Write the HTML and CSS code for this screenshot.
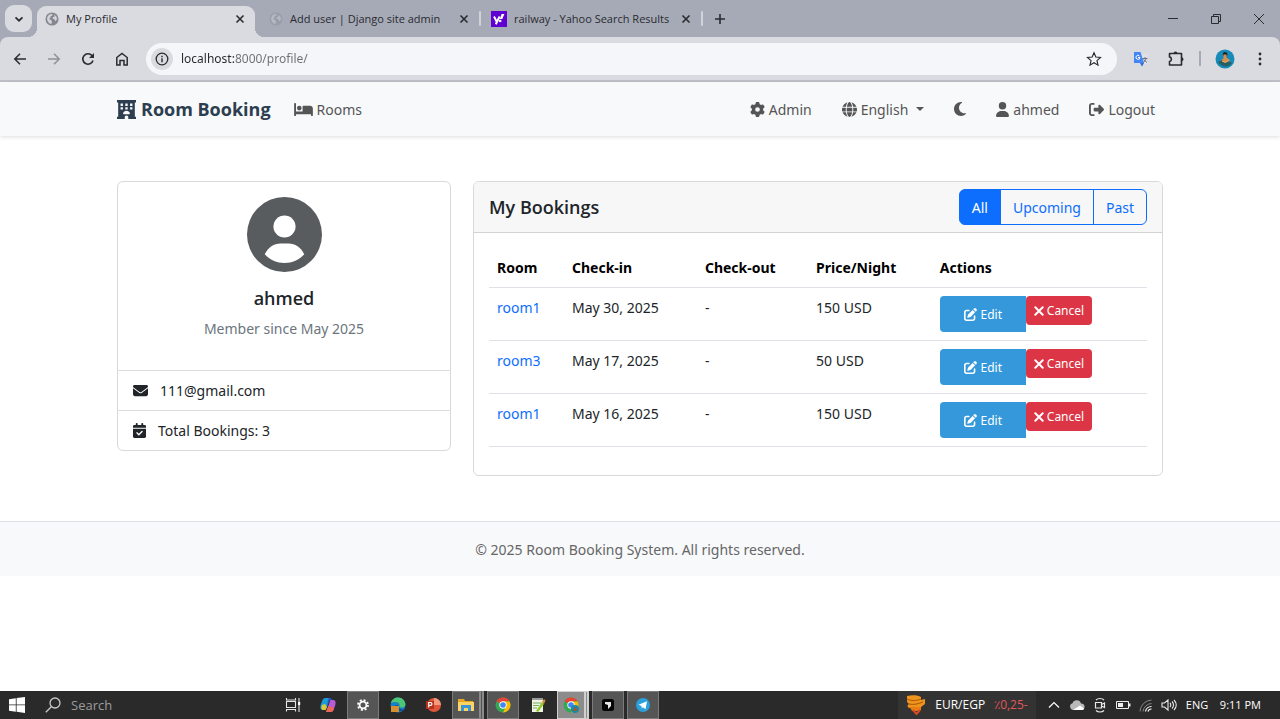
FILE: index.html
```html
<!DOCTYPE html>
<html lang="en">
<head>
<meta charset="utf-8">
<title>My Profile</title>
<link rel="stylesheet" href="styles.css">
</head>
<body>
<svg class="sprite" aria-hidden="true">
  <symbol id="globe-tab" viewBox="0 0 16 16"><circle cx="8" cy="8" r="7.5" fill="#85888f"/><path d="M2.5 6.5c1-3 3.5-4.5 6-4l-.5 1.8-2 .7.3 1.6-1.8 1.3 2.3 1.3 1.2 2-.8 2.6C4 12.800 1.900 9.500 2.500 6.500zM10 3l3 2.200.8 2.800-1.800 2.500-1.200-2.200-2-.5.2-1.800 2-.6z" fill="#d3d5da"/></symbol>
  <symbol id="close" viewBox="0 0 10 10"><path d="M1.500 1.500l7 7m0-7l-7 7" stroke="currentColor" stroke-width="1.600" fill="none"/></symbol>
  <symbol id="edit" viewBox="0 0 512 512"><path fill="currentColor" d="M471.6 21.7c-21.9-21.9-57.3-21.9-79.2 0L362.3 51.7l97.9 97.9 30.1-30.1c21.9-21.9 21.9-57.3 0-79.2L471.6 21.7zm-299.2 220c-6.1 6.1-10.8 13.6-13.5 21.9l-29.6 88.8c-2.9 8.6-.6 18.1 5.8 24.6s15.9 8.7 24.6 5.8l88.8-29.6c8.2-2.7 15.7-7.4 21.9-13.5L437.7 172.3 339.7 74.3 172.4 241.7zM96 64C43 64 0 107 0 160V416c0 53 43 96 96 96H352c53 0 96-43 96-96V320c0-17.7-14.3-32-32-32s-32 14.3-32 32v96c0 17.7-14.3 32-32 32H96c-17.7 0-32-14.3-32-32V160c0-17.7 14.3-32 32-32h96c17.7 0 32-14.3 32-32s-14.3-32-32-32H96z"/></symbol>
  <symbol id="xmark" viewBox="0 0 10 14"><path d="M1.300 3.300l7.400 7.400m0-7.400l-7.400 7.400" stroke="currentColor" stroke-width="2" stroke-linecap="round" fill="none"/></symbol>
  <symbol id="chrome" viewBox="0 0 16 16"><circle cx="8" cy="8" r="7.500" fill="#34a853"/><path d="M8 8L1.500 4.250A7.500 7.500 0 0 1 14.500 4.250L8 4.600z" fill="#ea4335"/><path d="M8 4.500h6.600A7.500 7.500 0 0 1 8 15.500L11 9.500z" fill="#fbbc04"/><circle cx="8" cy="8" r="3.700" fill="#fff"/><circle cx="8" cy="8" r="2.800" fill="#4285f4"/></symbol>
</svg>

<header class="chrome">
  <div class="tabstrip">
    <button class="tab-search" aria-label="Search tabs"><svg class="i10" viewBox="0 0 10 10"><path d="M1.500 3.300L5 6.700l3.500-3.400" stroke="currentColor" stroke-width="1.700" fill="none"/></svg></button>
    <div class="tab tab-active"><svg class="i14"><use href="#globe-tab"/></svg><span class="tab-title">My Profile</span><button class="tab-close" aria-label="Close tab"><svg class="i10"><use href="#close"/></svg></button></div>
    <div class="tab"><svg class="i14 dim"><use href="#globe-tab"/></svg><span class="tab-title">Add user | Django site admin</span><button class="tab-close" aria-label="Close tab"><svg class="i10"><use href="#close"/></svg></button></div>
    <div class="tab-sep"></div>
    <div class="tab"><svg class="i16" viewBox="0 0 16 16"><path d="M0 0h16v16H0z" fill="#5f01d1"/><path d="M3 5.500l2.600 5M8.600 5.500l-3.800 7.700" stroke="#fff" stroke-width="2" fill="none"/><path d="M10.600 3h2.800l-2.100 5H8.800z" fill="#fff"/><circle cx="9.200" cy="10" r="1.300" fill="#fff"/></svg><span class="tab-title">railway - Yahoo Search Results</span><button class="tab-close" aria-label="Close tab"><svg class="i10"><use href="#close"/></svg></button></div>
    <div class="tab-sep"></div>
    <button class="tab-new" aria-label="New tab"><svg class="i10" viewBox="0 0 10 10"><path d="M5 0v10M0 5h10" stroke="currentColor" stroke-width="1.600"/></svg></button>
    <div class="window-controls">
      <button aria-label="Minimize"><svg class="i10" viewBox="0 0 10 10"><path d="M0 4.500h10" stroke="currentColor"/></svg></button>
      <button aria-label="Restore"><svg class="i10" viewBox="0 0 10 10"><path d="M.5 2.500h7v7h-7zM2.500 2.500v-2h7v7h-2" stroke="currentColor" fill="none"/></svg></button>
      <button aria-label="Close"><svg class="i10" viewBox="0 0 10 10"><path d="M0 0l10 10M10 0L0 10" stroke="currentColor"/></svg></button>
    </div>
  </div>
  <div class="toolbar">
    <div class="nav-buttons">
      <button aria-label="Back"><svg class="i14" viewBox="0 0 14 14"><path d="M13 7H2M7 1.800L1.800 7 7 12.200" stroke="currentColor" stroke-width="1.500" fill="none"/></svg></button>
      <button class="disabled" aria-label="Forward"><svg class="i14" viewBox="0 0 14 14"><path d="M1 7h11M7 1.800L12.200 7 7 12.200" stroke="currentColor" stroke-width="1.500" fill="none"/></svg></button>
      <button aria-label="Reload"><svg class="i14" viewBox="0 0 14 14"><path d="M12 8.500A5.200 5.200 0 1 1 11 3.600l1 1.400" stroke="currentColor" stroke-width="1.600" fill="none"/><path d="M13 1v5H8z" fill="currentColor"/></svg></button>
      <button aria-label="Home"><svg class="i14" viewBox="0 0 14 14"><path d="M1.800 13V5.500L7 1.500l5.200 4V13H9V8.500H5V13z" stroke="currentColor" stroke-width="1.500" fill="none"/></svg></button>
    </div>
    <div class="omnibox">
      <button class="site-info" aria-label="Site information"><svg class="i14" viewBox="0 0 14 14"><circle cx="7" cy="7" r="5.800" stroke="currentColor" stroke-width="1.300" fill="none"/><path d="M7 6.200v4M7 3.700v1.500" stroke="currentColor" stroke-width="1.400"/></svg></button>
      <input class="url" type="text" aria-label="Address" value="localhost:8000/profile/">
      <button class="star" aria-label="Bookmark"><svg class="i16" viewBox="0 0 14 14"><path d="M7 1.500l1.600 3.800 4.100.4-3.100 2.700.9 4L7 10.300l-3.500 2.100.9-4L1.300 5.700l4.100-.4z" stroke="currentColor" stroke-width="1" fill="none"/></svg></button>
    </div>
    <div class="extensions">
      <button aria-label="Translate"><svg class="i16" viewBox="0 0 16 16"><path d="M7 3h7.500v10H9z" fill="#dfe1e5"/><path d="M1 1h6.500l3.500 11H1z" fill="#4285f4"/><path d="M7 12h4l-2 3.500z" fill="#3367d6"/><path d="M6.500 5A2 2 0 1 0 7 6.500H5" stroke="#fff" fill="none"/><path d="M9.500 7.500h5M12 6v1.500M13.500 7.500l-3 4M10.500 8.500l3.500 3" stroke="#6b7480" fill="none"/></svg></button>
      <button aria-label="Extensions"><svg class="i16" viewBox="0 0 16 16"><path d="M1.500 2.500h12v11.500h-12v-3.400a2.400 2.400 0 0 0 0-4.700z" stroke="currentColor" stroke-width="1.600" stroke-linejoin="round" fill="none"/><path d="M5.500 2.500a2 2 0 0 1 4 0zM13.500 6.200a2 2 0 0 1 0 4z" fill="currentColor"/></svg></button>
      <span class="divider"></span>
      <button aria-label="Profile"><svg class="i20" viewBox="0 0 20 20"><circle cx="10" cy="10" r="9.500" fill="#168bb9"/><path d="M8 4c1.500-2 4.500-1 4.500 1.500l-1 2-3.500-1z" fill="#27201f"/><path d="M8.500 5.500h3v3l3 2.500-1 4H6.500L5 12l3.500-2.500z" fill="#d98c4c"/><path d="M3 13l4-2 2 2.500 5-1 3 1.500c-3 4.500-10 5-14-1z" fill="#275f63"/><path d="M7 12l4 1.500 3-3" stroke="#f0b36c" fill="none"/></svg></button>
      <button aria-label="Menu"><svg class="i16" viewBox="0 0 16 16"><g fill="currentColor"><circle cx="8" cy="3" r="1.400"/><circle cx="8" cy="8" r="1.400"/><circle cx="8" cy="13" r="1.400"/></g></svg></button>
    </div>
  </div>
</header>

<div class="page">
  <nav class="navbar">
    <div class="container nav-inner">
      <a class="brand" href="#"><svg class="brand-icon" viewBox="0 0 512 512"><path fill="currentColor" d="M0 0H512V64H480V448H512V512H304V464c0-26.500-21.500-48-48-48s-48 21.500-48 48v48H0V448H32V64H0zM96 96v64h64V96zM224 96v64h64V96zM352 96v64h64V96zM96 192v64h64V192zM224 192v64h64V192zM352 192v64h64V192zM328 384c13.300 0 24.300-10.900 21-23.800c-10.600-41.500-48.200-72.200-93-72.200s-82.500 30.700-93 72.200c-3.300 12.800 7.800 23.800 21 23.800H328z" fill-rule="evenodd"/></svg>Room Booking</a>
      <a class="nav-link" href="#"><svg class="fa fa-bed" viewBox="0 0 640 512"><path fill="currentColor" d="M32 32c17.7 0 32 14.3 32 32V320H288V160c0-17.7 14.3-32 32-32H544c53 0 96 43 96 96V448c0 17.7-14.3 32-32 32s-32-14.3-32-32V416H64v32c0 17.7-14.3 32-32 32s-32-14.3-32-32V64C0 46.300 14.300 32 32 32zm144 96a80 80 0 1 1 0 160 80 80 0 1 1 0-160z"/></svg>Rooms</a>
      <div class="nav-right">
        <a class="nav-link" href="#"><svg class="fa" viewBox="0 0 512 512"><path fill="currentColor" d="M495.9 166.6c3.2 8.7 .5 18.4-6.4 24.6l-43.3 39.4c1.1 8.3 1.7 16.8 1.7 25.4s-.6 17.1-1.7 25.4l43.3 39.4c6.9 6.2 9.6 15.9 6.4 24.6c-4.4 11.9-9.7 23.3-15.8 34.3l-4.7 8.1c-6.6 11-14 21.4-22.1 31.2c-5.9 7.2-15.7 9.6-24.5 6.8l-55.7-17.7c-13.4 10.3-28.2 18.9-44 25.4l-12.5 57.1c-2 9.1-9 16.3-18.2 17.8c-13.8 2.3-28 3.5-42.5 3.5s-28.7-1.2-42.5-3.5c-9.2-1.5-16.2-8.7-18.2-17.8l-12.5-57.1c-15.8-6.5-30.6-15.1-44-25.4L83.1 425.9c-8.8 2.8-18.6 .3-24.5-6.8c-8.1-9.8-15.5-20.2-22.1-31.2l-4.7-8.1c-6.1-11-11.4-22.4-15.8-34.3c-3.2-8.7-.5-18.4 6.4-24.6l43.3-39.4C64.6 273.1 64 264.6 64 256s.6-17.1 1.7-25.4L22.4 191.2c-6.9-6.2-9.6-15.9-6.4-24.6c4.4-11.9 9.7-23.3 15.8-34.3l4.7-8.1c6.6-11 14-21.4 22.1-31.2c5.9-7.2 15.7-9.6 24.5-6.8l55.7 17.7c13.4-10.3 28.2-18.9 44-25.4l12.5-57.1c2-9.1 9-16.3 18.2-17.8C227.3 1.2 241.5 0 256 0s28.7 1.2 42.5 3.500c9.200 1.500 16.200 8.700 18.200 17.800l12.500 57.100c15.800 6.500 30.600 15.100 44 25.400l55.700-17.700c8.800-2.800 18.600-.3 24.500 6.800c8.100 9.800 15.500 20.200 22.100 31.200l4.700 8.100c6.100 11 11.400 22.400 15.800 34.300zM256 336a80 80 0 1 0 0-160 80 80 0 1 0 0 160z"/></svg>Admin</a>
        <button class="nav-link dropdown"><svg class="fa" viewBox="0 0 512 512"><path fill="currentColor" d="M352 256c0 22.2-1.2 43.6-3.3 64H163.3c-2.2-20.4-3.3-41.8-3.3-64s1.2-43.6 3.3-64H348.7c2.2 20.4 3.3 41.8 3.3 64zm28.8-64H503.9c5.3 20.5 8.1 41.9 8.1 64s-2.8 43.5-8.1 64H380.8c2.1-20.6 3.2-42 3.2-64s-1.1-43.4-3.2-64zm112.6-32H376.7c-10-63.9-29.8-117.4-55.3-151.6c78.3 20.7 142 77.5 171.9 151.6zm-149.1 0H167.7c6.1-36.4 15.5-68.6 27-94.7c10.5-23.6 22.2-40.7 33.5-51.5C239.4 3.2 248.7 0 256 0s16.6 3.2 27.8 13.8c11.3 10.8 23 27.9 33.5 51.5c11.6 26 20.9 58.2 27 94.7zm-209 0H18.6C48.6 85.9 112.2 29.1 190.6 8.4C165.1 42.6 145.3 96.1 135.3 160zM8.1 192H131.2c-2.1 20.6-3.2 42-3.2 64s1.1 43.4 3.2 64H8.1C2.8 299.5 0 278.1 0 256s2.8-43.5 8.1-64zM194.7 446.6c-11.6-26-20.9-58.2-27-94.6H344.3c-6.1 36.4-15.5 68.6-27 94.6c-10.5 23.6-22.2 40.7-33.5 51.5C272.6 508.8 263.3 512 256 512s-16.6-3.2-27.8-13.8c-11.3-10.8-23-27.9-33.5-51.5zM135.3 352c10 63.9 29.8 117.4 55.3 151.6C112.2 482.9 48.6 426.1 18.6 352H135.3zm358.1 0c-30 74.1-93.6 130.9-171.9 151.6c25.500-34.200 45.200-87.700 55.300-151.600H493.400z"/></svg>English<span class="caret"></span></button>
        <button class="nav-link" aria-label="Dark mode"><svg class="fa fa-moon" viewBox="0 0 384 512"><path fill="currentColor" d="M223.5 32C100 32 0 132.3 0 256S100 480 223.5 480c60.6 0 115.5-24.2 155.8-63.4c5-4.9 6.3-12.5 3.1-18.7s-10.1-9.7-17-8.5c-9.8 1.7-19.8 2.6-30.1 2.6c-96.9 0-175.500-78.800-175.500-176c0-65.800 36-123.100 89.300-153.300c6.100-3.500 9.200-10.500 7.700-17.300s-7.300-11.900-14.300-12.500c-6.300-.5-12.600-.8-19-.8z"/></svg></button>
        <a class="nav-link" href="#"><svg class="fa fa-narrow" viewBox="0 0 448 512"><path fill="currentColor" d="M224 256A128 128 0 1 0 224 0a128 128 0 1 0 0 256zm-45.7 48C79.8 304 0 383.8 0 482.3C0 498.7 13.3 512 29.7 512H418.3c16.4 0 29.7-13.3 29.7-29.7C448 383.8 368.2 304 269.7 304H178.3z"/></svg>ahmed</a>
        <a class="nav-link" href="#"><svg class="fa" viewBox="0 0 512 512"><path fill="currentColor" d="M377.9 105.9L500.7 228.7c7.2 7.2 11.3 17.1 11.3 27.3s-4.1 20.1-11.3 27.3L377.9 406.1c-6.4 6.4-15 9.9-24 9.9c-18.7 0-33.9-15.2-33.9-33.9l0-62.1-128 0c-17.7 0-32-14.3-32-32l0-64c0-17.7 14.3-32 32-32l128 0 0-62.1c0-18.7 15.2-33.9 33.9-33.900c9 0 17.600 3.600 24 9.900zM160 96L96 96c-17.700 0-32 14.300-32 32l0 256c0 17.700 14.300 32 32 32l64 0c17.700 0 32 14.300 32 32s-14.300 32-32 32l-64 0c-53 0-96-43-96-96L0 128C0 75 43 32 96 32l64 0c17.700 0 32 14.300 32 32s-14.300 32-32 32z"/></svg>Logout</a>
      </div>
    </div>
  </nav>

  <main class="container columns">
    <section class="card">
      <div class="profile">
        <svg class="avatar" viewBox="0 0 224 224"><circle cx="112" cy="112" r="112" fill="#585c5f"/><circle cx="112" cy="88" r="33" fill="#fff"/><path d="M53 171C64 150 80 139 100 139h24c20 0 36 11 47 32-15 17-36 26-59 26s-44-9-59-26z" fill="#fff"/></svg>
        <h5 class="name">ahmed</h5>
        <p class="since">Member since May 2025</p>
      </div>
      <ul class="facts">
        <li><svg class="fa" viewBox="0 0 512 512"><path fill="currentColor" d="M48 64C21.5 64 0 85.5 0 112c0 15.1 7.1 29.3 19.2 38.4L236.8 313.6c11.4 8.5 27 8.5 38.4 0L492.8 150.4c12.1-9.1 19.2-23.3 19.2-38.4c0-26.5-21.5-48-48-48H48zM0 176V384c0 35.3 28.7 64 64 64H448c35.3 0 64-28.7 64-64V176L294.4 339.2c-22.8 17.1-54 17.1-76.8 0L0 176z"/></svg>111@gmail.com</li>
        <li><svg class="fa fa-narrow" viewBox="0 0 448 512"><path fill="currentColor" d="M128 0c17.7 0 32 14.3 32 32V64H288V32c0-17.7 14.3-32 32-32s32 14.3 32 32V64h48c26.5 0 48 21.5 48 48v48H0V112C0 85.5 21.5 64 48 64H96V32c0-17.7 14.3-32 32-32zM0 192H448V464c0 26.5-21.5 48-48 48H48c-26.5 0-48-21.5-48-48V192zM329 305c9.4-9.4 9.4-24.6 0-33.9s-24.6-9.4-33.9 0l-95 95-47-47c-9.4-9.4-24.6-9.4-33.9 0s-9.4 24.6 0 33.9l64 64c9.4 9.4 24.6 9.4 33.9 0L329 305z"/></svg>Total Bookings: 3</li>
      </ul>
    </section>

    <section class="card">
      <div class="card-head">
        <h5 class="card-title">My Bookings</h5>
        <div class="filters"><button class="filter active">All</button><button class="filter">Upcoming</button><button class="filter">Past</button></div>
      </div>
      <div class="card-body">
        <table class="bookings">
          <colgroup><col class="c-room"><col class="c-in"><col class="c-out"><col class="c-price"><col></colgroup>
          <thead><tr><th>Room</th><th>Check-in</th><th>Check-out</th><th>Price/Night</th><th>Actions</th></tr></thead>
          <tbody>
            <tr><td><a href="#">room1</a></td><td>May 30, 2025</td><td>-</td><td>150 USD</td><td><div class="actions"><button class="edit"><svg><use href="#edit"/></svg>Edit</button><button class="cancel"><svg><use href="#xmark"/></svg>Cancel</button></div></td></tr>
            <tr><td><a href="#">room3</a></td><td>May 17, 2025</td><td>-</td><td>50 USD</td><td><div class="actions"><button class="edit"><svg><use href="#edit"/></svg>Edit</button><button class="cancel"><svg><use href="#xmark"/></svg>Cancel</button></div></td></tr>
            <tr><td><a href="#">room1</a></td><td>May 16, 2025</td><td>-</td><td>150 USD</td><td><div class="actions"><button class="edit"><svg><use href="#edit"/></svg>Edit</button><button class="cancel"><svg><use href="#xmark"/></svg>Cancel</button></div></td></tr>
          </tbody>
        </table>
      </div>
    </section>
  </main>

  <footer class="footer">© 2025 Room Booking System. All rights reserved.</footer>
</div>

<div class="taskbar">
  <button class="start" aria-label="Start"><svg class="i16" viewBox="0 0 16 16"><path d="M0 2.200l6.800-1v6.300H0zM7.600 1.100L16 0v7.500H7.600zM0 8.300h6.800v6.400L0 13.800zM7.600 8.300H16V16l-8.400-1.200z" fill="#fff"/></svg></button>
  <label class="search"><svg class="i16" viewBox="0 0 16 16"><circle cx="10" cy="6" r="5" stroke="#c8c8c8" stroke-width="1.300" fill="none"/><path d="M6.300 9.700L.8 15.200" stroke="#c8c8c8" stroke-width="1.300"/></svg><input type="text" placeholder="Search" aria-label="Search"></label>
  <div class="apps">
    <button aria-label="Task view"><svg class="i16" viewBox="0 0 16 16"><path d="M1.500 4.500h9v6h-9zM1.500 1v2h9V1M1.500 14.500v-2h9v2M14 1v14" stroke="#e6e6e6" stroke-width="1.100" fill="none"/><path d="M13 5h2.200v3H13z" fill="#fff"/></svg></button>
    <button aria-label="Copilot"><svg class="i16" viewBox="0 0 16 16"><path d="M5 1h5L7 10 5.500 13H3C0 13 0 10 1 7l1.500-4C3 2 4 1 5 1z" fill="#1c9bd8"/><path d="M2 8l3-1 2 3-1.500 3H3C1 13 1 10 2 8z" fill="#d9c93a"/><path d="M9 1h1c1.500 0 1.500 2 2.500 2L9 4.500 7 10 8 3z" fill="#2356c4"/><path d="M10.500 3H13c3 0 3 3 2 6l-1.500 4c-.5 1.500-1.500 2-3 2H6z" fill="#b75cd3"/><path d="M8.500 9l5.500 2c-.8 3-1.500 4-4 4H6z" fill="#f0674f"/></svg></button>
    <button class="open" aria-label="Settings"><svg class="i16" viewBox="0 0 16 16"><circle cx="8" cy="8" r="3.400" stroke="#fff" stroke-width="1.800" fill="none"/><circle cx="8" cy="8" r="5" stroke="#fff" stroke-width="1.800" stroke-dasharray="2 1.927" fill="none"/></svg></button>
    <button aria-label="Edge"><svg class="i16" viewBox="0 0 16 16"><circle cx="8" cy="8" r="7.500" fill="#1681c9"/><path d="M1 6C2.500-1 13-1.500 15.300 6c.7 3-1.300 4.500-4 4.500C8 10.500 11 7 8 5.500 5.500 4.500 3 5 1 6z" fill="#4dc775"/><path d="M8 8c0 3 3 5 6.500 4C12 16 4 15 5 8.500z" fill="#124f94"/><path d="M1 9h8v6H1z" fill="#d59131"/></svg></button>
    <button aria-label="PowerPoint"><svg class="i16" viewBox="0 0 16 16"><circle cx="9" cy="8" r="7" fill="#e0563a"/><path d="M9 1a7 7 0 0 1 7 7H9z" fill="#f29a80"/><path d="M1 4h8v8H1z" fill="#b9301c"/><path d="M3.700 10.500v-5H5.500a1.400 1.400 0 0 1 0 2.900H3.700" stroke="#fff" stroke-width="1.200" fill="none"/></svg></button>
    <button class="open stacked" aria-label="File Explorer"><svg class="i16" viewBox="0 0 16 16"><path d="M0 2h6l1 2h8v10H0z" fill="#e8a921"/><path d="M0 5h16v9H0z" fill="#fcd462"/><path d="M3 14V8h10v6h-3v-3H6v3z" fill="#3c94d8"/></svg></button>
    <button class="open" aria-label="Chrome"><svg class="i16"><use href="#chrome"/></svg></button>
    <button aria-label="Notepad++"><svg class="i16" viewBox="0 0 16 16"><path d="M2 2h11v13H2z" fill="#eef3e4"/><path d="M3 6h8M3 8.500h6M3 11h4" stroke="#77ad5b"/><path d="M2 1h11v2H2z" fill="#9b9e98"/><path d="M6 14l6-9 2 2-6 8z" fill="#91c929"/><path d="M12 5l2-3 1.500 1.500L14 7z" fill="#d58b33"/></svg></button>
    <button class="open stacked current" aria-label="Chrome window"><svg class="i16" viewBox="0 0 16 16"><use href="#chrome"/><circle cx="12" cy="12" r="4" fill="#178aa8"/><path d="M10 14l1.500-4 2 1 .5 3z" fill="#9b5833"/></svg></button>
    <button class="open" aria-label="Editor"><svg class="i16" viewBox="0 0 16 16"><rect x="2" y="2" width="12" height="12" rx="2.500" fill="#050505"/><path d="M5 5h6v4l-3 3V8L5 7z" fill="#e5e5e5"/></svg></button>
    <button class="open" aria-label="Telegram"><svg class="i16" viewBox="0 0 16 16"><circle cx="8" cy="8" r="7" fill="#2ba0da"/><path d="M3.500 7.800l8.500-3.500-1.500 8-2.500-2-1.300 1.300L6.500 9z" fill="#fff"/></svg></button>
  </div>
  <div class="tray">
    <button class="rate"><svg class="i20" viewBox="0 0 20 20"><path d="M1 1c5-1 11-1 14 1v3l4-1v5l-4 3H8l-5 1c-2-1-2-3 0-4L1 7z" fill="#ee931b"/><path d="M1 4c4 2 9 2 14 0M3 9c5 1 9 0 14-2M4 13c3 1 7 1 10 0" stroke="#a85708" fill="none"/><path d="M4 12h11v3l-4 1H6z" fill="#e87b12"/><path d="M7 15l3.500 4 3.500-4" stroke="#d84a25" stroke-width="2" fill="none"/></svg>EUR/EGP <bdo class="fall" dir="ltr">٪0,25-</bdo></button>
    <button aria-label="Show hidden icons"><svg class="i12" viewBox="0 0 12 12"><path d="M1 8.500L6 3.500l5 5" stroke="#fff" stroke-width="1.200" fill="none"/></svg></button>
    <button aria-label="OneDrive"><svg class="i16" viewBox="0 0 16 16"><path d="M4 13a3.500 3.500 0 0 1-.5-6.800A4.500 4.500 0 0 1 12 6.500 3.300 3.300 0 0 1 13 13z" fill="#b8b8b8"/><path d="M4 13l7-4.500 4 3c-.4 1-1 1.500-2 1.500z" fill="#fff"/></svg></button>
    <button aria-label="Meet now"><svg class="i16" viewBox="0 0 16 16"><path d="M3.500 5.500h6v5.500h-6zM9.500 7.500l3-1.500v4.500l-3-1.500M4 3c2-2 6-2 8 0M4 13.500c2 2 6 2 8 0" stroke="#e8e8e8" stroke-width="1.200" fill="none"/></svg></button>
    <button aria-label="Battery"><svg class="i16" viewBox="0 0 16 16"><path d="M1.500 4.500h12v7h-12z" stroke="#eee" fill="none"/><path d="M3 6h5v4H3zM14 6.500h1.500v3H14z" fill="#eee"/></svg></button>
    <button aria-label="Wi-Fi"><svg class="i16" viewBox="0 0 16 16"><path d="M2 14.500A12 12 0 0 1 13.500 3M5 14.500A9 9 0 0 1 13.500 6.500" stroke="#858585" fill="none"/><path d="M7.500 14.500a6 6 0 0 1 6-5M10 14.500a3.500 3.500 0 0 1 3.500-2.500" stroke="#fff" stroke-width="1.200" fill="none"/></svg></button>
    <button aria-label="Volume"><svg class="i16" viewBox="0 0 16 16"><path d="M1 6h2.500L7 3v10l-3.500-3H1zM9 6c1 1 1 3 0 4M11 4.500c2 2 2 5 0 7M13 3c3 3 3 7 0 10" stroke="#e8e8e8" stroke-width="1.100" fill="none"/></svg></button>
    <button class="lang">ENG</button>
    <button class="clock">9:11 PM</button>
  </div>
</div>
</body>
</html>
```

FILE: styles.css
```css
* { box-sizing: border-box; }

body {
  margin: 0;
  min-height: 100vh;
  display: flex;
  flex-direction: column;
  background: #fff;
  color: #212529;
  font: 14px/23px "Noto Sans", "Open Sans", sans-serif;
}

button, input {
  font: inherit;
  color: inherit;
  background: none;
  border: 0;
  padding: 0;
  margin: 0;
}
button { display: flex; align-items: center; justify-content: center; }
svg { display: block; flex: none; }
a { text-decoration: none; }
h5, p, ul { margin: 0; padding: 0; }

.sprite { position: absolute; width: 0; height: 0; }
.i10 { width: 10px; height: 10px; }
.i12 { width: 12px; height: 12px; }
.i14 { width: 14px; height: 14px; }
.i16 { width: 16px; height: 16px; }
.i20 { width: 20px; height: 20px; }
.dim { opacity: .35; }

/* Browser frame */
.chrome { background: #a6aab7; color: #2a2b2f; font-family: "Open Sans", sans-serif; font-size: 11px; line-height: 16px; }
.tabstrip { display: flex; align-items: center; height: 37px; padding-left: 5px; }
.tab-search { width: 27px; height: 27px; border-radius: 9px; background: #dadbe0; }
.tab { display: flex; align-items: center; width: 218px; height: 31px; padding: 0 10px 5px 8px; gap: 7px; align-self: flex-end; }
.tab-active { position: relative; margin: 0 6px 0 5px; background: #dadbe0; border-radius: 9px 9px 0 0; }
.tab-active::before, .tab-active::after { content: ""; position: absolute; bottom: 0; width: 9px; height: 9px; }
.tab-active::before { left: -9px; background: radial-gradient(circle at 0 0, transparent 9px, #dadbe0 9px); }
.tab-active::after { right: -9px; background: radial-gradient(circle at 100% 0, transparent 9px, #dadbe0 9px); }
.tab-title { flex: 1; white-space: nowrap; }
.tab-sep { width: 2px; height: 15px; background: #d1d3da; border-radius: 1px; margin: 0 2px 0 0; }
.tab-new { width: 30px; height: 26px; }
.window-controls { display: flex; margin-left: auto; }
.window-controls button { width: 43px; height: 37px; }

.toolbar {
  display: flex;
  align-items: center;
  height: 45px;
  background: #dadbe0;
  border-bottom: 2px solid #c1c2c9;
  border-radius: 8px 8px 0 0;
}
.nav-buttons { display: flex; padding: 0 7px 0 3px; }
.nav-buttons button { width: 34px; height: 30px; }
.nav-buttons .disabled { color: #8f9198; }
.omnibox { flex: 1; display: flex; align-items: center; height: 32px; padding: 0 15px 0 5px; border-radius: 16px; background: #f5f6f9; }
.site-info { width: 22px; height: 22px; border-radius: 50%; background: #dadbe0; }
.url {
  flex: 1;
  min-width: 0;
  margin: 0 8px;
  font-family: "Noto Sans", sans-serif;
  font-size: 12px;
  background: linear-gradient(to right, #26272b 54px, #6b6e75 54px);
  background-clip: text;
  -webkit-text-fill-color: transparent;
}
.extensions { display: flex; align-items: center; padding: 0 3px 0 6px; }
.extensions button { width: 35px; height: 30px; }
.divider { width: 2px; height: 15px; margin: 0 6px; background: #a6aab7; }

/* Page */
.page { flex: 1; }
.container { max-width: 1070px; margin: 0 auto; padding: 0 12px; }
.navbar { background: #f8f9fb; box-shadow: 0 1px 4px rgba(0, 0, 0, .14); }
.nav-inner { display: flex; align-items: center; height: 54px; }
.brand { display: flex; align-items: center; gap: 5px; margin-right: 15px; color: #2c3e50; font-family: "Open Sans", sans-serif; font-size: 18px; font-weight: 700; white-space: nowrap; }
.brand-icon { width: 19px; height: 19px; }
.nav-link { display: flex; align-items: center; gap: 4px; padding: 8px; color: #555; white-space: nowrap; }
.nav-right { display: flex; gap: 14px; margin-left: auto; }
.fa { width: 15px; height: 15px; }
.fa-bed { width: 19px; }
.fa-narrow { width: 13px; }
.fa-moon { width: 12px; height: 16px; }
.caret { margin-left: 4px; border: 4px solid transparent; border-top-color: currentColor; border-bottom: 0; }

.columns { display: grid; grid-template-columns: 334fr 690fr; gap: 22px; align-items: start; padding-top: 45px; padding-bottom: 45px; }
.card { border: 1px solid #d8d9da; border-radius: 6px; background: #fff; overflow: hidden; }
.profile { display: flex; flex-direction: column; align-items: center; padding: 15px; }
.avatar { width: 75px; height: 75px; margin-bottom: 15px; }
.name, .card-title { font-family: "Open Sans", sans-serif; font-size: 18px; line-height: 23px; font-weight: 600; }
.name { margin-bottom: 7px; }
.since { color: #6c757d; margin-bottom: 15px; }
.facts { list-style: none; }
.facts li { display: flex; align-items: center; gap: 12px; padding: 8px 15px; border-top: 1px solid #dcdee1; }

.card-head { display: flex; align-items: center; justify-content: space-between; padding: 7px 15px; background: #f7f7f7; border-bottom: 1px solid #d2d3d4; }
.filters { display: flex; }
.filter { height: 36px; padding: 0 12px; border: 1px solid #0d6efd; color: #0d6efd; margin-left: -1px; }
.filter:first-child { border-radius: 6px 0 0 6px; margin-left: 0; }
.filter:last-child { border-radius: 0 6px 6px 0; }
.filter.active { background: #0d6efd; color: #fff; }

.card-body { padding: 15px; }
.bookings { width: 100%; margin-bottom: 13px; border-collapse: separate; border-spacing: 0; table-layout: fixed; }
.c-room { width: 11.4%; }
.c-in { width: 20.2%; }
.c-out { width: 16.9%; }
.c-price { width: 18.8%; }
.bookings th, .bookings td { padding: 8px; text-align: left; vertical-align: top; border-bottom: 1px solid #dee2e6; white-space: nowrap; }
.bookings th { color: #000; }
.bookings a { color: #0d6efd; }
.actions { display: flex; align-items: flex-start; }
.actions button { color: #fff; font-size: 12px; }
.edit { height: 36px; width: 86px; gap: 4px; background: #3498db; border-radius: 4px 0 0 4px; }
.edit svg { width: 13px; height: 13px; }
.cancel { height: 29px; padding: 0 8px; gap: 3px; background: #dc3545; border-radius: 4px; }
.cancel svg { width: 10px; height: 14px; }

.footer { padding: 16px 16px 15px; text-align: center; color: #666; background: #f8f9fb; border-top: 1px solid #dee2e6; }

/* Taskbar */
.taskbar { display: flex; align-items: center; height: 28px; background: #2a2a2a; color: #fff; font-family: "Open Sans", sans-serif; font-size: 11px; line-height: 16px; }
.start { width: 34px; height: 28px; }
.search { display: flex; align-items: center; width: 243px; padding-left: 11px; gap: 10px; }
.search input { flex: 1; min-width: 0; font-size: 13px; }
.search input::placeholder { color: #9c9c9c; opacity: 1; }
.apps { display: flex; gap: 3px; }
.apps button { width: 32px; height: 28px; }
.apps .open { background: #555; border: 1px solid #7b7b7b; }
.apps .stacked { border-right: 5px double #8a8a8a; }
.apps .current { background: #8c8c8c; border-color: #d0d0d0; }
.tray { display: flex; align-items: center; margin-left: auto; padding-right: 19px; }
.tray button { width: 23px; height: 28px; white-space: nowrap; }
.tray .rate { width: 138px; gap: 9px; margin-right: 6px; background: #333; font-size: 12px; }
.fall { color: #e0585a; }
.tray .lang { width: 30px; margin: 0 5px 0 2px; }
.tray .clock { width: 44px; justify-content: flex-end; }
```
